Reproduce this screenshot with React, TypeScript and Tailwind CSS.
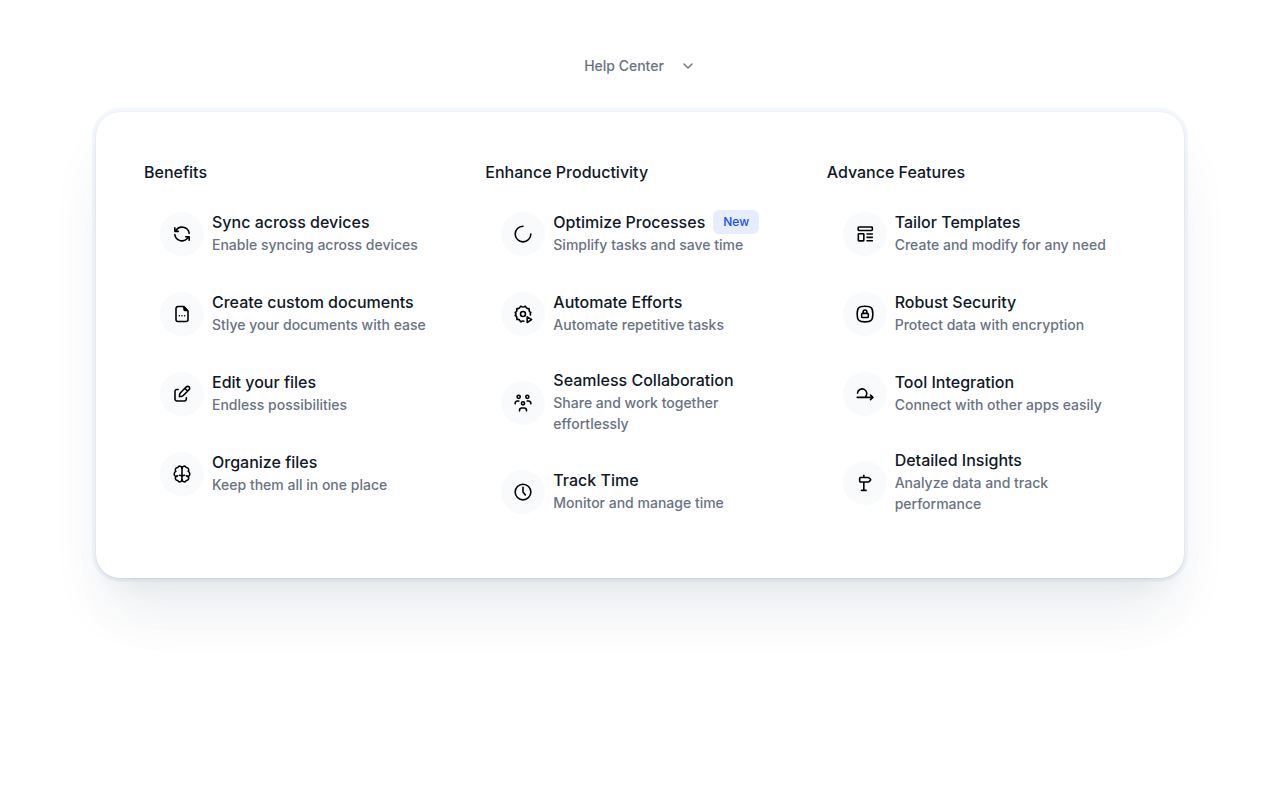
import type { ReactNode } from 'react';
import { ChevronDown } from 'lucide-react';

type Item = { title: string; text: string; icon: ReactNode; badge?: string };
type Column = { heading: string; items: Item[] };

function Icon({ children }: { children: ReactNode }) {
  return (
    <svg
      viewBox="0 0 24 24"
      className="size-5"
      fill="none"
      stroke="currentColor"
      strokeWidth="1.9"
      strokeLinecap="round"
      strokeLinejoin="round"
      aria-hidden
    >
      {children}
    </svg>
  );
}

const COLUMNS: Column[] = [
  {
    heading: 'Benefits',
    items: [
      {
        title: 'Sync across devices',
        text: 'Enable syncing across devices',
        icon: (
          <Icon>
            <path d="M20.6 11.2A8.6 8.6 0 0 0 4.6 8.2M3.4 4.6v4.2h4.2M3.4 12.8a8.6 8.6 0 0 0 16 3M20.6 19.4v-4.2h-4.2" />
          </Icon>
        ),
      },
      {
        title: 'Create custom documents',
        text: 'Stlye your documents with ease',
        icon: (
          <Icon>
            <path d="M13.8 3H7.2a2.4 2.4 0 0 0-2.4 2.4v13.2A2.4 2.4 0 0 0 7.2 21h9.6a2.4 2.4 0 0 0 2.4-2.4V8.4z" />
            <path d="M14.4 3.4v3.2a1.2 1.2 0 0 0 1.2 1.2h3z" fill="currentColor" />
            <path d="M8.8 14h.01M12 14h.01M15.2 14h.01" />
          </Icon>
        ),
      },
      {
        title: 'Edit your files',
        text: 'Endless possibilities',
        icon: (
          <Icon>
            <path d="M7.4 6.6H6A2.4 2.4 0 0 0 3.6 9v9A2.4 2.4 0 0 0 6 20.4h8.8a2.4 2.4 0 0 0 2.4-2.4v-1.6" />
            <path d="M17.2 3.5a2.3 2.3 0 0 1 3.3 3.3l-7 7c-.7.7-1.5 1-2.4 1.1l-2.2.2.2-2.2c.1-.9.4-1.7 1.1-2.4zM15.6 5.4l3 3" />
          </Icon>
        ),
      },
      {
        title: 'Organize files',
        text: 'Keep them all in one place',
        icon: (
          <Icon>
            <path d="M12 5a2.6 2.6 0 0 0-5-.8 2.8 2.8 0 0 0-2.4 4.6 3.6 3.6 0 0 0 0 6.4A2.8 2.8 0 0 0 7 19.800 2.600 2.600 0 0 0 12 19" />
            <path d="M12 5a2.6 2.6 0 0 1 5-.8 2.8 2.8 0 0 1 2.4 4.6 3.6 3.6 0 0 1 0 6.4 2.8 2.8 0 0 1-2.400 4.600A2.600 2.600 0 0 1 12 19" />
            <path d="M12 5v14M9 13.400c1.700 0 2.700.7 3 2 .3-1.300 1.300-2 3-2M4.600 15.200c.5-.6 1.200-1 2.200-1M19.400 15.200c-.5-.6-1.200-1-2.200-1" />
          </Icon>
        ),
      },
    ],
  },
  {
    heading: 'Enhance Productivity',
    items: [
      {
        title: 'Optimize Processes',
        text: 'Simplify tasks and save time',
        badge: 'New',
        icon: (
          <Icon>
            <path d="M12 2.6a9.4 9.4 0 1 0 9.4 9.4" />
          </Icon>
        ),
      },
      {
        title: 'Automate Efforts',
        text: 'Automate repetitive tasks',
        icon: (
          <Icon>
            <circle cx="12" cy="12" r="3" />
            <path d="M21 13.2c-.5-.8-.5-1.600 0-2.400l.4-.6c-1.600-.6-2.300-1.800-2-3.600l-.2-1.200c-1.900.5-3.200-.2-3.900-2l-.9-.8c-1.200 1.300-3.600 1.300-4.800 0l-.9.8c-.7 1.800-2 2.500-3.900 2l-.2 1.200c.3 1.800-.4 3-2 3.600l.4.6c.8.8.8 1.600 0 2.400l-.4.6c1.600.6 2.300 1.800 2 3.600l.2 1.200c1.900-.5 3.200.2 3.900 2l.9.8c1-1 2-1.200 3.400-.8" />
            <path d="M17 15.400v6.800l5.400-3.400z" />
          </Icon>
        ),
      },
      {
        title: 'Seamless Collaboration',
        text: 'Share and work together effortlessly',
        icon: (
          <Icon>
            <circle cx="6.8" cy="4.6" r="1.9" />
            <circle cx="17.2" cy="4.6" r="1.9" />
            <circle cx="12" cy="12.4" r="1.9" />
            <path d="M7.8 21.4v-.6a2.8 2.8 0 0 1 2.8-2.8h2.8a2.8 2.8 0 0 1 2.8 2.8v.6M2.6 13v-.6a2.8 2.8 0 0 1 2.8-2.8H7M21.4 13v-.6a2.8 2.8 0 0 0-2.8-2.8H17" />
          </Icon>
        ),
      },
      {
        title: 'Track Time',
        text: 'Monitor and manage time',
        icon: (
          <Icon>
            <circle cx="12" cy="12" r="9.4" />
            <path d="M12 6.4V12l2.8 3.6" />
          </Icon>
        ),
      },
    ],
  },
  {
    heading: 'Advance Features',
    items: [
      {
        title: 'Tailor Templates',
        text: 'Create and modify for any need',
        icon: (
          <Icon>
            <rect x="3.8" y="3.6" width="17" height="4.2" rx="0.8" />
            <rect x="4" y="11.6" width="6.6" height="8.6" rx="0.8" />
            <path d="M14.4 12h6.4M14.4 16h6.4M14.4 20h6.4" />
          </Icon>
        ),
      },
      {
        title: 'Robust Security',
        text: 'Protect data with encryption',
        icon: (
          <Icon>
            <path d="M12 2.6c7.4 0 9.4 2 9.4 9.4s-2 9.4-9.4 9.4-9.4-2-9.4-9.4 2-9.4 9.4-9.4z" />
            <rect x="8" y="11.2" width="8" height="5" rx="1" />
            <path d="M9.8 11.2V9.4a2.2 2.2 0 0 1 4.4 0v1.8" />
          </Icon>
        ),
      },
      {
        title: 'Tool Integration',
        text: 'Connect with other apps easily',
        icon: (
          <Icon>
            <path d="M3 11a5.600 5.600 0 1 1 9.400 4.600M2.600 16H21" />
            <path d="M18.600 13.200l2.800 2.800-2.800 2.800" />
          </Icon>
        ),
      },
      {
        title: 'Detailed Insights',
        text: 'Analyze data and track performance',
        icon: (
          <Icon>
            <path d="M6.6 5.4h8.8c.6 0 1 .1 1.4.5l1.8 1.6c.4.4.4.8 0 1.2l-1.8 1.6c-.4.4-.8.5-1.4.5H6.6a1 1 0 0 1-1-1V6.400a1 1 0 0 1 1-1zM10.600 2.800v2.600M10.600 10.800v10M7.800 20.800h5.600" />
          </Icon>
        ),
      },
    ],
  },
];

function MenuItem({ title, text, icon, badge }: Item) {
  return (
    <li>
      <a href="#" className="flex items-center gap-2 rounded-xl p-4 hover:bg-gray-50">
        <span className="flex size-11 shrink-0 items-center justify-center rounded-full bg-gray-50 text-black">
          {icon}
        </span>
        <span className="flex min-w-0 flex-col gap-1">
          <span className="flex items-center gap-2 text-base leading-none text-gray-900">
            {title}
            {badge && (
              <span className="-my-1 rounded-md bg-[#e5edff] px-2.5 text-xs leading-6 text-[#1350f5]">
                {badge}
              </span>
            )}
          </span>
          <span className="text-sm leading-[21px] text-gray-500">{text}</span>
        </span>
      </a>
    </li>
  );
}

export default function App() {
  return (
    <main className="min-h-screen bg-white px-6 py-12 font-['Inter',sans-serif] font-medium lg:px-24">
      <button
        type="button"
        aria-expanded="true"
        className="mx-auto mb-7 flex h-9 items-center gap-4 text-sm text-gray-500"
      >
        Help Center
        <ChevronDown className="size-4" aria-hidden />
      </button>

      <nav
        aria-label="Help Center"
        className="grid gap-8 rounded-3xl bg-white p-12 shadow-[0_0_0_4px_rgba(226,232,244,0.4),0_0_1px_0_rgba(30,50,80,0.2),0_2px_3px_0_rgba(30,60,90,0.14),0_16px_24px_-12px_rgba(30,60,100,0.06),0_36px_60px_-12px_rgba(30,60,100,0.09),0_60px_64px_-8px_rgba(30,60,80,0.015)] md:grid-cols-3"
      >
        {COLUMNS.map(({ heading, items }) => (
          <section key={heading}>
            <h2 className="mb-3 text-base text-gray-900">{heading}</h2>
            <ul className="flex flex-col gap-1">
              {items.map((item) => (
                <MenuItem key={item.title} {...item} />
              ))}
            </ul>
          </section>
        ))}
      </nav>
    </main>
  );
}
